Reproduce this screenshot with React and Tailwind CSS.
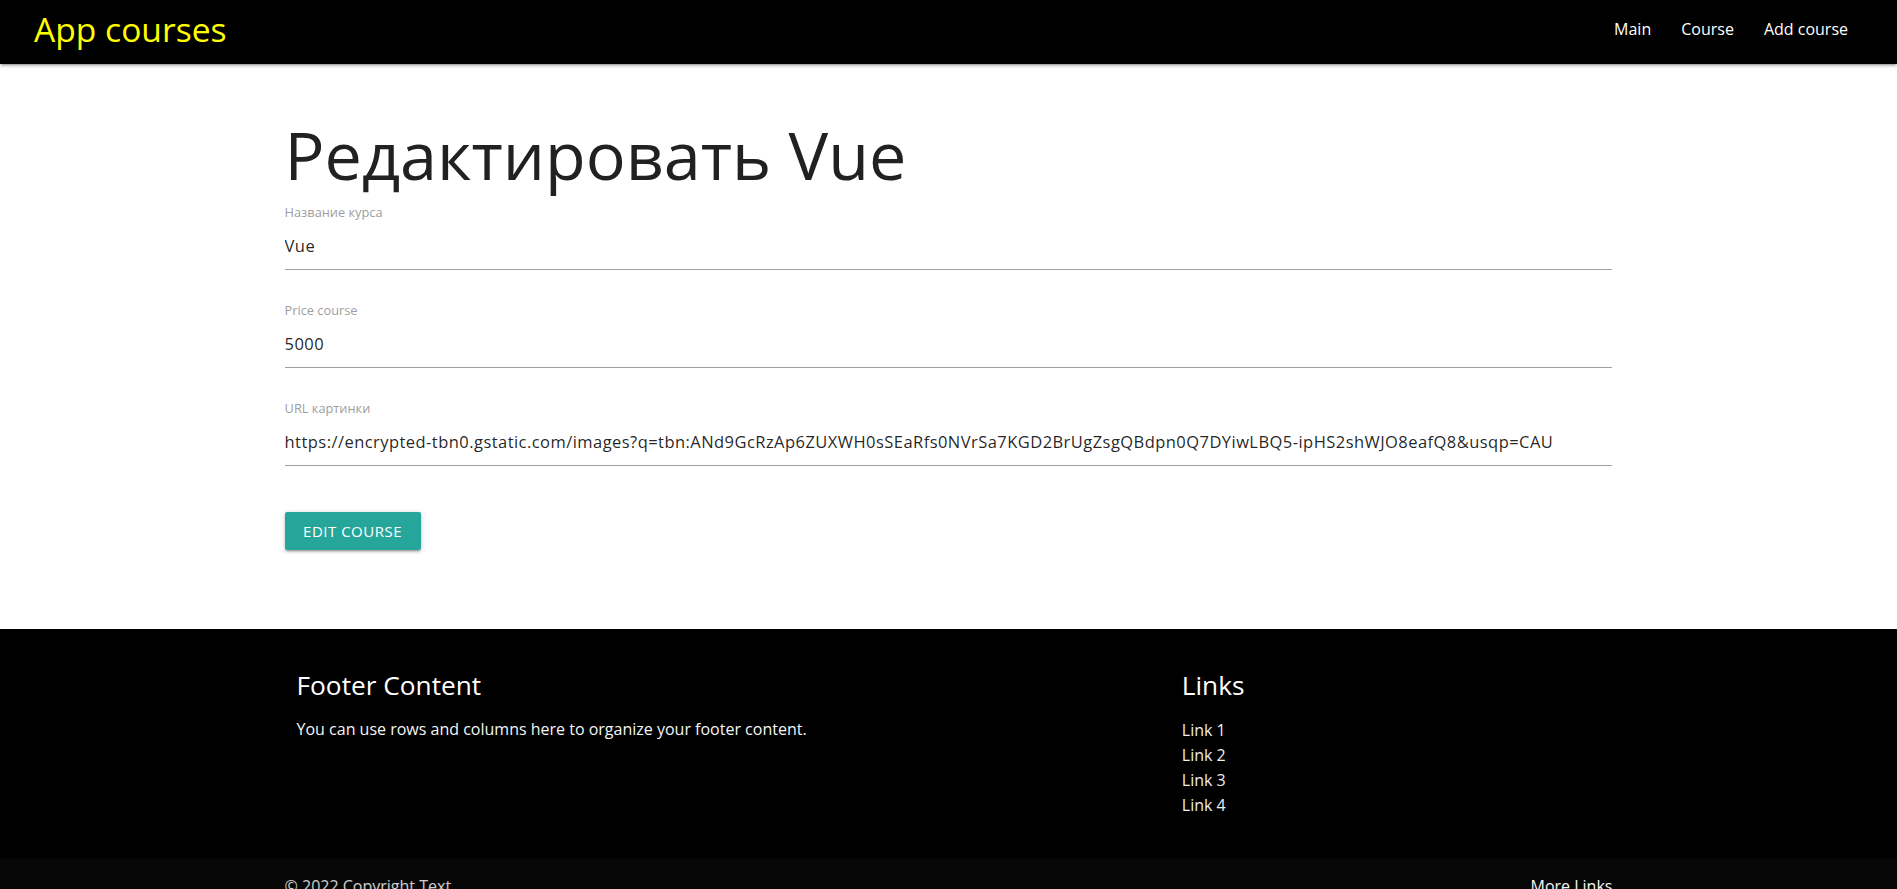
import React from 'react'

const fields = [
  { label: 'Название курса', value: 'Vue' },
  { label: 'Price course', value: '5000' },
  {
    label: 'URL картинки',
    value:
      'https://encrypted-tbn0.gstatic.com/images?q=tbn:ANd9GcRzAp6ZUXWH0sSEaRfs0NVrSa7KGD2BrUgZsgQBdpn0Q7DYiwLBQ5-ipHS2shWJO8eafQ8&usqp=CAU',
  },
]

const Navbar = () => {
  return (
    <nav className="relative z-10 flex h-16 items-start justify-between bg-black px-[34px] shadow-[0_2px_2px_0_rgba(0,0,0,0.14),0_3px_1px_-2px_rgba(0,0,0,0.12),0_1px_5px_0_rgba(0,0,0,0.2)]">
      <a href="#" className="text-[33.6px] leading-[59px] text-[#ffff00]">
        App courses
      </a>
      <ul className="flex">
        {['Main', 'Course', 'Add course'].map((item) => (
          <li key={item}>
            <a href="#" className="block px-[15px] text-base leading-[59px] text-white">
              {item}
            </a>
          </li>
        ))}
      </ul>
    </nav>
  )
}

const EditCourse = () => {
  return (
    <main className="mx-auto w-[70%] pb-[79px]">
      <h1 className="mt-[52px] mb-[12px] text-[66.5px] leading-[77px] font-normal text-[#212121]">
        Редактировать Vue
      </h1>
      <form className="flex flex-col gap-[33px]" onSubmit={(e) => e.preventDefault()}>
        {fields.map((field) => (
          <div key={field.label}>
            <label className="block text-[12.8px] leading-[15px] text-[#9e9e9e]">{field.label}</label>
            <input
              type="text"
              defaultValue={field.value}
              className="mt-[1px] block h-[49px] w-full border-b border-[#9e9e9e] bg-transparent text-[16.5px] tracking-[0.45px] text-black/[0.87] outline-none"
            />
          </div>
        ))}
        <div className="mt-[13px]">
          <button
            type="submit"
            className="h-[38px] w-[136px] rounded-[2px] bg-[#26a69a] text-[15px] tracking-[0.5px] text-white uppercase shadow-[0_2px_2px_0_rgba(0,0,0,0.14),0_3px_1px_-2px_rgba(0,0,0,0.12),0_1px_5px_0_rgba(0,0,0,0.2)]"
          >
            Edit course
          </button>
        </div>
      </form>
    </main>
  )
}

const Footer = () => {
  return (
    <footer className="bg-black text-white">
      <div className="mx-auto grid w-[70%] grid-cols-12 pt-[42px] pb-[40px]">
        <div className="col-span-6 px-3">
          <h5 className="text-[26.24px] leading-[29px]">Footer Content</h5>
          <p className="mt-[17px] text-base leading-[25px] text-[#f5f5f5]">
            You can use rows and columns here to organize your footer content.
          </p>
        </div>
        <div className="col-span-4 col-start-9 px-3">
          <h5 className="text-[26.24px] leading-[29px]">Links</h5>
          <ul className="mt-[18px]">
            {['Link 1', 'Link 2', 'Link 3', 'Link 4'].map((link) => (
              <li key={link} className="leading-[25px]">
                <a href="#" className="text-base text-[#eeeeee]">
                  {link}
                </a>
              </li>
            ))}
          </ul>
        </div>
      </div>
      <div className="bg-[#060606]">
        <div className="mx-auto flex h-[56px] w-[70%] items-center justify-between text-base text-white/80">
          <span>© 2022 Copyright Text</span>
          <a href="#" className="text-[#f5f5f5]">
            More Links
          </a>
        </div>
      </div>
    </footer>
  )
}

const App = () => {
  return (
    <div className="min-h-screen bg-white font-['Open_Sans',sans-serif]">
      <Navbar />
      <EditCourse />
      <Footer />
    </div>
  )
}

export default App
